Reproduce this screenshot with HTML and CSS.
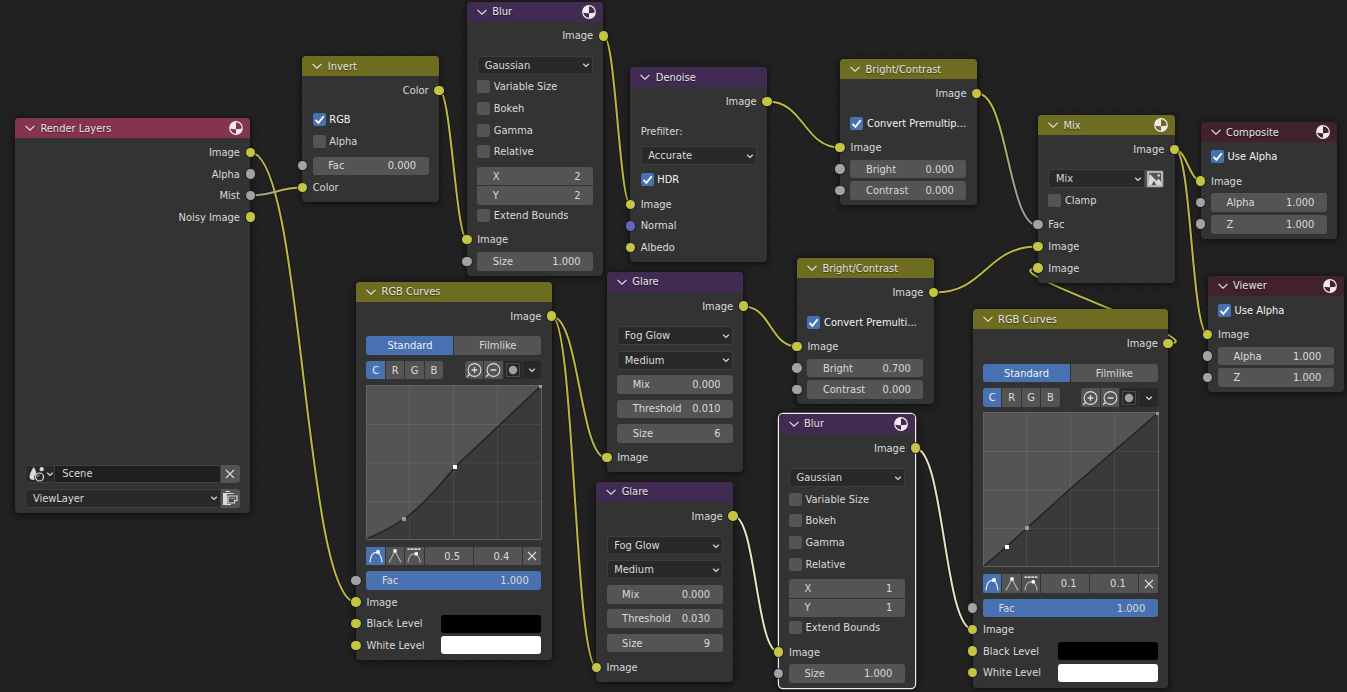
FILE: index.html
```html
<!DOCTYPE html>
<html lang="en">

<head>
    <meta charset="UTF-8">
    <meta name="viewport" content="width=device-width, initial-scale=1.0">
    <title>Compositor</title>
    <link rel="stylesheet" href="styles.css">
</head>

<body>

    <!-- icons -->
    <svg class="defs" width="0" height="0">
        <symbol id="chevron" viewBox="0 0 12 12"><path d="M1.5 3.8 6 8.2 10.5 3.8" fill="none" stroke="currentColor" stroke-width="1.1"/></symbol>
        <symbol id="down" viewBox="0 0 8 8"><path d="M1.2 2.7 4 5.4 6.8 2.7" fill="none" stroke="currentColor" stroke-width="1.2"/></symbol>
        <symbol id="ball" viewBox="0 0 14 14">
            <circle cx="7" cy="7" r="6.3" fill="none" stroke="currentColor" stroke-width="1.2"/>
            <path d="M7 7V.8A6.2 6.2 0 0 0 .9 7.6Q3.5 8.4 7 8.2V13.2Q12.6 12.7 13.2 7.4Q10.5 8.2 7 8.2Z" fill="currentColor"/>
        </symbol>
        <symbol id="check" viewBox="0 0 12 12"><path d="M2.3 6.4 5 9.1 9.9 3" fill="none" stroke="#fff" stroke-width="1.7"/></symbol>
        <symbol id="cross" viewBox="0 0 12 12"><path d="M2 2 10 10M10 2 2 10" fill="none" stroke="currentColor" stroke-width="1.1"/></symbol>
        <symbol id="zoom-in" viewBox="0 0 16 16"><path d="M3.8 12.2 1 14.8M5.6 8H11.4M8.5 5.1V10.9" fill="none" stroke="currentColor" stroke-width="1.3"/><circle cx="8.5" cy="8" r="6.4" fill="none" stroke="currentColor" stroke-width="1.1"/></symbol>
        <symbol id="zoom-out" viewBox="0 0 16 16"><path d="M3.8 12.2 1 14.8M5.6 8H11.4" fill="none" stroke="currentColor" stroke-width="1.3"/><circle cx="8.5" cy="8" r="6.4" fill="none" stroke="currentColor" stroke-width="1.1"/></symbol>
        <symbol id="clip" viewBox="0 0 16 16"><rect x="1.5" y="1.5" width="13" height="13" fill="none" stroke="#4a4a4a"/><circle cx="8" cy="8" r="4.2" fill="#a0a0a0"/></symbol>
        <symbol id="auto" viewBox="0 0 16 16"><path d="M2 14.5C2.500 1 13.500 1 14 14.5" fill="none" stroke="currentColor" stroke-width="1.1"/><rect x="8.300" y="2.200" width="3.500" height="3.500" fill="#fff"/></symbol>
        <symbol id="vector" viewBox="0 0 16 16"><path d="M2 14.5 8 3 14 14.5" fill="none" stroke="#b4b4b4" stroke-width="1.1"/><rect x="6.400" y="1.300" width="3.200" height="3.200" fill="#fff"/></symbol>
        <symbol id="clamped" viewBox="0 0 16 16"><path d="M1.500 1.200H14.500" stroke="#fff" stroke-width="1.2" stroke-dasharray="2.800 .6"/><path d="M2 14.5C2.500 3 13.500 3 14 14.5" fill="none" stroke="#b4b4b4" stroke-width="1.1"/><rect x="8.700" y="4.200" width="3.200" height="3.200" fill="#fff"/></symbol>
        <symbol id="scene" viewBox="0 0 16 16"><path d="M4.800 .8Q7.200 5 7.300 7.800Q4.300 10 5.500 14Q.5 14.200 .5 10.500Q.7 7.500 4.800 .8Z" fill="currentColor"/><circle cx="12.700" cy="3.200" r="2.100" fill="currentColor"/><circle cx="10.500" cy="11" r="4" fill="none" stroke="currentColor" stroke-width="1.2"/><path d="M10.500 9Q8.600 9.200 8.500 11" fill="none" stroke="currentColor" stroke-width=".8"/></symbol>
        <symbol id="layer" viewBox="0 0 16 16"><path d="M3.500 1.500H8M1 3.500H11.500M1 14.500H9" fill="none" stroke="currentColor" stroke-width="1.2"/><path d="M1 3H5V15H1Z" fill="currentColor"/><path d="M6 6H15V10.500H12.500V13H6Z" fill="#4c4c4c" stroke="currentColor" stroke-width="1.2"/><path d="M7.500 8.300H14" stroke="currentColor" stroke-dasharray="1.2 1"/></symbol>
        <symbol id="image-alpha" viewBox="0 0 16 16"><rect x="1" y="1" width="14" height="14" fill="#555" stroke="currentColor" stroke-width="1.4"/><path d="M2 8V14H4.500L7 9.500L3 3.500 2.500 3ZM2.500 2.500 9.500 14H14V11L11.500 7.500 9.500 10Z" fill="currentColor"/><circle cx="11.700" cy="4.500" r="1.300" fill="currentColor"/></symbol>
    </svg>

    <div class="editor">

        <!-- links between sockets -->
        <svg class="links" width="1347" height="692">
            <defs>
                <linearGradient id="mist" gradientUnits="userSpaceOnUse" x1="250" y1="0" x2="303" y2="0">
                    <stop offset="0.1" stop-color="#9c9c9c"/><stop offset="0.8" stop-color="#bdbb4d"/>
                </linearGradient>
                <linearGradient id="fac" gradientUnits="userSpaceOnUse" x1="0" y1="93" x2="0" y2="225">
                    <stop offset="0.1" stop-color="#bdbb40"/><stop offset="0.8" stop-color="#9c9c9c"/>
                </linearGradient>
                <g id="link-paths">
                    <path d="M250.5 152.5C303.5 152.5 303.5 602.5 356.5 602.5"/>
                    <path d="M439.5 90.5C451 90.5 456 239.5 467 239.5"/>
                    <path d="M604 36.5C615.500 36.5 619.500 204.5 630.5 204.5"/>
                    <path d="M768 101.5C804 101.5 804 147.5 840 147.5"/>
                    <path d="M934.5 292.5C986 292.5 986 246.5 1038 246.5"/>
                    <path d="M1168 343.5C1221 343.5 985 268.5 1038 268.5"/>
                    <path d="M1175 149.5C1186 149.5 1190 181 1201 181"/>
                    <path d="M1175 149.5C1191.5 149.5 1191.5 334.5 1208 334.5"/>
                    <path d="M552 316.5C579.5 316.5 579.5 458.5 607 458.5"/>
                    <path d="M552 316.5C574.5 316.5 574.5 667.5 597 667.5"/>
                    <path d="M744 306.5C770.5 306.5 770.5 346.5 797 346.5"/>
                </g>
                <path id="link-mist" d="M250.5 195.5C276.5 195.5 276.5 187.5 303 187.5"/>
                <path id="link-fac" d="M977.5 93.5C1008 93.5 1008 225.5 1038 225.5"/>
                <g id="link-selected">
                    <path d="M733.5 516C756 516 756 652.5 779 652.5"/>
                    <path d="M915.5 448.5C944 448.5 944 629.5 973 629.5"/>
                </g>
            </defs>
            <g class="outline"><use href="#link-paths"/><use href="#link-mist"/><use href="#link-fac"/><use href="#link-selected"/></g>
            <use href="#link-paths" class="link"/>
            <use href="#link-mist" class="link mist"/>
            <use href="#link-fac" class="link fac"/>
            <use href="#link-selected" class="link selected"/>
        </svg>

        <div class="node input render-layers">
            <div class="title"><svg class="chevron"><use href="#chevron"/></svg>Render Layers<svg class="ball"><use href="#ball"/></svg></div>
            <div class="row out"><i class="socket"></i>Image</div>
            <div class="row out"><i class="socket gray"></i>Alpha</div>
            <div class="row out"><i class="socket gray"></i>Mist</div>
            <div class="row out"><i class="socket"></i>Noisy Image</div>
            <div class="row push">
                <div class="scene-icon"><svg class="icon"><use href="#scene"/></svg><svg class="down"><use href="#down"/></svg></div>
                <div class="name">Scene</div>
                <div class="button end"><svg class="cross"><use href="#cross"/></svg></div>
            </div>
            <div class="row gap">
                <div class="select joined">ViewLayer<svg class="down"><use href="#down"/></svg></div>
                <div class="button end"><svg class="icon"><use href="#layer"/></svg></div>
            </div>
        </div>

        <div class="node color invert">
            <div class="title"><svg class="chevron"><use href="#chevron"/></svg>Invert</div>
            <div class="row out"><i class="socket"></i>Color</div>
            <div class="row first on"><span class="box"><svg><use href="#check"/></svg></span>RGB</div>
            <div class="row"><span class="box"></span>Alpha</div>
            <div class="row gap"><i class="socket gray"></i><div class="field"><span>Fac</span><span>0.000</span></div></div>
            <div class="row"><i class="socket"></i>Color</div>
        </div>

        <div class="node filter blur-a">
            <div class="title"><svg class="chevron"><use href="#chevron"/></svg>Blur<svg class="ball"><use href="#ball"/></svg></div>
            <div class="row out"><i class="socket"></i>Image</div>
            <div class="row first"><div class="select">Gaussian<svg class="down"><use href="#down"/></svg></div></div>
            <div class="row"><span class="box"></span>Variable Size</div>
            <div class="row"><span class="box"></span>Bokeh</div>
            <div class="row"><span class="box"></span>Gamma</div>
            <div class="row"><span class="box"></span>Relative</div>
            <div class="pair">
                <div class="field"><span>X</span><span>2</span></div>
                <div class="field"><span>Y</span><span>2</span></div>
            </div>
            <div class="row"><span class="box"></span>Extend Bounds</div>
            <div class="row gap"><i class="socket"></i>Image</div>
            <div class="row"><i class="socket gray"></i><div class="field"><span>Size</span><span>1.000</span></div></div>
        </div>

        <div class="node filter denoise">
            <div class="title"><svg class="chevron"><use href="#chevron"/></svg>Denoise</div>
            <div class="row out"><i class="socket"></i>Image</div>
            <div class="row first">Prefilter:</div>
            <div class="row gap"><div class="select">Accurate<svg class="down"><use href="#down"/></svg></div></div>
            <div class="row gap on"><span class="box"><svg><use href="#check"/></svg></span>HDR</div>
            <div class="row gap"><i class="socket"></i>Image</div>
            <div class="row"><i class="socket blue"></i>Normal</div>
            <div class="row"><i class="socket"></i>Albedo</div>
        </div>

        <div class="node color bright-a">
            <div class="title"><svg class="chevron"><use href="#chevron"/></svg>Bright/Contrast</div>
            <div class="row out"><i class="socket"></i>Image</div>
            <div class="row first on"><span class="box"><svg><use href="#check"/></svg></span>Convert Premultip...</div>
            <div class="row gap"><i class="socket"></i>Image</div>
            <div class="row"><i class="socket gray"></i><div class="field"><span>Bright</span><span>0.000</span></div></div>
            <div class="row"><i class="socket gray"></i><div class="field"><span>Contrast</span><span>0.000</span></div></div>
        </div>

        <div class="node color mix">
            <div class="title"><svg class="chevron"><use href="#chevron"/></svg>Mix<svg class="ball"><use href="#ball"/></svg></div>
            <div class="row out"><i class="socket"></i>Image</div>
            <div class="row first">
                <div class="select joined">Mix<svg class="down"><use href="#down"/></svg></div>
                <div class="button end"><svg class="icon"><use href="#image-alpha"/></svg></div>
            </div>
            <div class="row"><span class="box"></span>Clamp</div>
            <div class="row gap"><i class="socket gray"></i>Fac</div>
            <div class="row"><i class="socket"></i>Image</div>
            <div class="row"><i class="socket"></i>Image</div>
        </div>

        <div class="node output composite">
            <div class="title"><svg class="chevron"><use href="#chevron"/></svg>Composite<svg class="ball"><use href="#ball"/></svg></div>
            <div class="row on"><span class="box"><svg><use href="#check"/></svg></span>Use Alpha</div>
            <div class="row gap"><i class="socket"></i>Image</div>
            <div class="row"><i class="socket gray"></i><div class="field"><span>Alpha</span><span>1.000</span></div></div>
            <div class="row"><i class="socket gray"></i><div class="field"><span>Z</span><span>1.000</span></div></div>
        </div>

        <div class="node output viewer">
            <div class="title"><svg class="chevron"><use href="#chevron"/></svg>Viewer<svg class="ball"><use href="#ball"/></svg></div>
            <div class="row on"><span class="box"><svg><use href="#check"/></svg></span>Use Alpha</div>
            <div class="row gap"><i class="socket"></i>Image</div>
            <div class="row"><i class="socket gray"></i><div class="field"><span>Alpha</span><span>1.000</span></div></div>
            <div class="row"><i class="socket gray"></i><div class="field"><span>Z</span><span>1.000</span></div></div>
        </div>

        <div class="node color curves-a">
            <div class="title"><svg class="chevron"><use href="#chevron"/></svg>RGB Curves</div>
            <div class="row out"><i class="socket"></i>Image</div>
            <div class="row first"><div class="tabs"><span class="active">Standard</span><span>Filmlike</span></div></div>
            <div class="row gap tools">
                <div class="channels"><span class="active">C</span><span>R</span><span>G</span><span>B</span></div>
                <div class="view">
                    <span><svg class="icon"><use href="#zoom-in"/></svg></span>
                    <span><svg class="icon"><use href="#zoom-out"/></svg></span>
                    <span class="dark"><svg class="icon"><use href="#clip"/></svg></span>
                    <span class="dark"><svg class="down"><use href="#down"/></svg></span>
                </div>
            </div>
            <svg class="plot" viewBox="0 0 176 155">
                <path class="area" d="M0 0H175L89 82Q56 122 38 134Q20 146 0 154Z"/>
                <path class="grid" d="M43.5 0V155M87.5 0V155M131.5 0V155M0 39.5H176M0 78H176M0 116.5H176"/>
                <path class="curve" d="M0 154Q20 146 38 134Q56 122 89 82L175 1"/>
                <path class="frame" d="M.5 .5H175.5V154.5H.5Z"/>
                <rect class="point" x="36" y="132" width="4" height="4"/>
                <rect class="point" x="173" y="0" width="3" height="3"/>
                <rect class="point picked" x="87" y="80" width="4" height="4"/>
            </svg>
            <div class="row handles">
                <span class="active"><svg class="icon"><use href="#auto"/></svg></span>
                <span><svg class="icon"><use href="#vector"/></svg></span>
                <span><svg class="icon"><use href="#clamped"/></svg></span>
                <span class="coord">0.5</span>
                <span class="coord">0.4</span>
                <span><svg class="cross"><use href="#cross"/></svg></span>
            </div>
            <div class="row gap"><i class="socket gray"></i><div class="field full"><span>Fac</span><span>1.000</span></div></div>
            <div class="row"><i class="socket"></i>Image</div>
            <div class="row"><i class="socket"></i>Black Level<div class="swatch black"></div></div>
            <div class="row"><i class="socket"></i>White Level<div class="swatch white"></div></div>
        </div>

        <div class="node filter glare-a">
            <div class="title"><svg class="chevron"><use href="#chevron"/></svg>Glare</div>
            <div class="row out"><i class="socket"></i>Image</div>
            <div class="row first"><div class="select">Fog Glow<svg class="down"><use href="#down"/></svg></div></div>
            <div class="row gap"><div class="select">Medium<svg class="down"><use href="#down"/></svg></div></div>
            <div class="row gap"><div class="field"><span>Mix</span><span>0.000</span></div></div>
            <div class="row gap"><div class="field"><span>Threshold</span><span>0.010</span></div></div>
            <div class="row gap"><div class="field"><span>Size</span><span>6</span></div></div>
            <div class="row gap"><i class="socket"></i>Image</div>
        </div>

        <div class="node filter glare-b">
            <div class="title"><svg class="chevron"><use href="#chevron"/></svg>Glare</div>
            <div class="row out"><i class="socket"></i>Image</div>
            <div class="row first"><div class="select">Fog Glow<svg class="down"><use href="#down"/></svg></div></div>
            <div class="row gap"><div class="select">Medium<svg class="down"><use href="#down"/></svg></div></div>
            <div class="row gap"><div class="field"><span>Mix</span><span>0.000</span></div></div>
            <div class="row gap"><div class="field"><span>Threshold</span><span>0.030</span></div></div>
            <div class="row gap"><div class="field"><span>Size</span><span>9</span></div></div>
            <div class="row gap"><i class="socket"></i>Image</div>
        </div>

        <div class="node color bright-b">
            <div class="title"><svg class="chevron"><use href="#chevron"/></svg>Bright/Contrast</div>
            <div class="row out"><i class="socket"></i>Image</div>
            <div class="row first on"><span class="box"><svg><use href="#check"/></svg></span>Convert Premulti...</div>
            <div class="row gap"><i class="socket"></i>Image</div>
            <div class="row"><i class="socket gray"></i><div class="field"><span>Bright</span><span>0.700</span></div></div>
            <div class="row"><i class="socket gray"></i><div class="field"><span>Contrast</span><span>0.000</span></div></div>
        </div>

        <div class="node filter blur-b selected">
            <div class="title"><svg class="chevron"><use href="#chevron"/></svg>Blur<svg class="ball"><use href="#ball"/></svg></div>
            <div class="row out"><i class="socket"></i>Image</div>
            <div class="row first"><div class="select">Gaussian<svg class="down"><use href="#down"/></svg></div></div>
            <div class="row"><span class="box"></span>Variable Size</div>
            <div class="row"><span class="box"></span>Bokeh</div>
            <div class="row"><span class="box"></span>Gamma</div>
            <div class="row"><span class="box"></span>Relative</div>
            <div class="pair">
                <div class="field"><span>X</span><span>1</span></div>
                <div class="field"><span>Y</span><span>1</span></div>
            </div>
            <div class="row"><span class="box"></span>Extend Bounds</div>
            <div class="row gap"><i class="socket"></i>Image</div>
            <div class="row"><i class="socket gray"></i><div class="field"><span>Size</span><span>1.000</span></div></div>
        </div>

        <div class="node color curves-b">
            <div class="title"><svg class="chevron"><use href="#chevron"/></svg>RGB Curves</div>
            <div class="row out"><i class="socket"></i>Image</div>
            <div class="row first"><div class="tabs"><span class="active">Standard</span><span>Filmlike</span></div></div>
            <div class="row gap tools">
                <div class="channels"><span class="active">C</span><span>R</span><span>G</span><span>B</span></div>
                <div class="view">
                    <span><svg class="icon"><use href="#zoom-in"/></svg></span>
                    <span><svg class="icon"><use href="#zoom-out"/></svg></span>
                    <span class="dark"><svg class="icon"><use href="#clip"/></svg></span>
                    <span class="dark"><svg class="down"><use href="#down"/></svg></span>
                </div>
            </div>
            <svg class="plot" viewBox="0 0 176 155">
                <path class="area" d="M0 0H175L87 77L44 116Q20 138 0 154Z"/>
                <path class="grid" d="M43.5 0V155M87.5 0V155M131.5 0V155M0 39.5H176M0 78H176M0 116.5H176"/>
                <path class="curve" d="M1 154Q20 138 44 116L87 77L175 1"/>
                <path class="frame" d="M.5 .5H175.5V154.5H.5Z"/>
                <rect class="point" x="42" y="114" width="4" height="4"/>
                <rect class="point" x="173" y="0" width="3" height="3"/>
                <rect class="point picked" x="22" y="133" width="4" height="4"/>
            </svg>
            <div class="row handles">
                <span class="active"><svg class="icon"><use href="#auto"/></svg></span>
                <span><svg class="icon"><use href="#vector"/></svg></span>
                <span><svg class="icon"><use href="#clamped"/></svg></span>
                <span class="coord">0.1</span>
                <span class="coord">0.1</span>
                <span><svg class="cross"><use href="#cross"/></svg></span>
            </div>
            <div class="row gap"><i class="socket gray"></i><div class="field full"><span>Fac</span><span>1.000</span></div></div>
            <div class="row"><i class="socket"></i>Image</div>
            <div class="row"><i class="socket"></i>Black Level<div class="swatch black"></div></div>
            <div class="row"><i class="socket"></i>White Level<div class="swatch white"></div></div>
        </div>

    </div>

</body>

</html>
```
FILE: styles.css
```css
* {
    box-sizing: border-box;
}

body {
    margin: 0;
    background-color: #212121;
    overflow: hidden;
    font-family: "DejaVu Sans Condensed", "DejaVu Sans", sans-serif;
    font-stretch: condensed;
    font-size: 11px;
    color: #dadada;
}

.defs {
    position: absolute;
}

.editor {
    position: relative;
    width: 1347px;
    height: 692px;
    overflow: hidden;
    background-image: radial-gradient(circle at center, #292929 0.8px, transparent 1.5px);
    background-size: 19.65px 19.65px;
    background-position: -1.8px 3.2px;
}

/* links */
.links {
    position: absolute;
    left: 0;
    top: 0;
    fill: none;
}

.outline {
    stroke: #181818;
    stroke-width: 4;
}

.link {
    stroke: #bdb93f;
    stroke-width: 2;
}

.link.mist {
    stroke: url(#mist);
}

.link.fac {
    stroke: url(#fac);
}

.link.selected {
    stroke: #e6e5c4;
}

/* nodes */
.node {
    position: absolute;
    display: flex;
    flex-direction: column;
    width: 136.6px;
    padding: 0 10.3px 3.9px;
    background-color: #333333;
    border-radius: 4px;
    box-shadow: 0 1px 6px 1px rgba(0, 0, 0, 0.55);
}

.node.selected {
    box-shadow: 0 0 0 1.2px #f0f0f0, 0 1px 6px 2px rgba(0, 0, 0, 0.55);
}

.render-layers { left: 15px; top: 118px; width: 235.2px; height: 395px; }
.invert { left: 302.4px; top: 56px; }
.blur-a { left: 466.9px; top: 1.5px; }
.denoise { left: 630.4px; top: 67.3px; }
.bright-a { left: 840.2px; top: 59.3px; }
.mix { left: 1038px; top: 115px; }
.composite { left: 1200.7px; top: 122.2px; }
.viewer { left: 1207.7px; top: 275.6px; }
.curves-a { left: 356.2px; top: 281.8px; width: 195.4px; }
.glare-a { left: 606.9px; top: 271.8px; }
.glare-b { left: 596.3px; top: 481.7px; }
.bright-b { left: 797.1px; top: 258.3px; }
.blur-b { left: 778.7px; top: 413.8px; }
.curves-b { left: 972.7px; top: 309.3px; width: 195.4px; }

.title {
    display: flex;
    align-items: center;
    flex: none;
    height: 20px;
    margin: 0 -10.3px 3.7px;
    padding: 0 7px 0 9px;
    border-radius: 4px 4px 0 0;
    color: #e6e6e6;
    text-shadow: 0 1px 1px rgba(0, 0, 0, 0.5);
}

.input .title { background-color: #84344e; }
.color .title { background-color: #6e6c20; }
.filter .title { background-color: #422b52; }
.output .title { background-color: #41212b; }

.chevron {
    width: 12px;
    height: 12px;
    margin-right: 4.4px;
}

.ball {
    width: 14px;
    height: 14px;
    margin-left: auto;
    color: #f3e9ee;
}

.row {
    position: relative;
    display: flex;
    align-items: center;
    flex: none;
    height: 21.6px;
    white-space: nowrap;
}

.gap {
    margin-top: 2.8px;
}

.first {
    margin-top: 7.8px;
}

.push {
    margin-top: auto;
}

.out {
    justify-content: flex-end;
}

.on {
    color: #f2f2f2;
}

.socket {
    position: absolute;
    left: -15px;
    top: 6px;
    width: 9.4px;
    height: 9.4px;
    border-radius: 50%;
    background-color: #c5c544;
    box-shadow: 0 0 0 0.8px #1c1c1c;
}

.out .socket {
    left: auto;
    right: -15px;
}

.socket.gray { background-color: #a3a3a3; }
.socket.blue { background-color: #6464bf; }

/* widgets */
.field {
    display: flex;
    flex: 1;
    align-items: center;
    justify-content: space-between;
    height: 18.6px;
    padding: 0 12.6px 0 15.5px;
    border-radius: 3px;
    background-color: #545454;
}

.field.full {
    background-color: #4871b1;
}

.pair {
    display: flex;
    flex-direction: column;
    gap: 0.8px;
    flex: none;
    height: 37.4px;
    margin-top: 4.6px;
}

.pair .field:first-child { border-radius: 3px 3px 0 0; }
.pair .field:last-child { border-radius: 0 0 3px 3px; }

.select {
    display: flex;
    flex: 1;
    align-items: center;
    justify-content: space-between;
    height: 19px;
    padding: 0 2px 0 6.6px;
    border: 1px solid #3e3e3e;
    border-radius: 3px;
    background-color: #292929;
}

.select.joined {
    border-radius: 3px 0 0 3px;
}

.down {
    width: 8px;
    height: 8px;
}

.cross {
    width: 12px;
    height: 12px;
}

.icon {
    flex: none;
    width: 16px;
    height: 16px;
}

.button {
    display: flex;
    align-items: center;
    justify-content: center;
    width: 19px;
    height: 18.6px;
    background-color: #545454;
}

.end {
    border-radius: 0 3px 3px 0;
}

.box {
    display: flex;
    width: 13px;
    height: 13px;
    margin-right: 3.6px;
    border-radius: 2px;
    background-color: #545454;
}

.on .box {
    background-color: #4871b1;
}

.box svg {
    width: 13px;
    height: 13px;
}

.scene-icon,
.name {
    display: flex;
    align-items: center;
    height: 18.6px;
    border: 1px solid #3e3e3e;
    background-color: #292929;
}

.scene-icon {
    width: 30px;
    padding-left: 3px;
    border-radius: 3px 0 0 3px;
}

.scene-icon .down {
    margin-left: 1px;
}

.name {
    flex: 1;
    padding-left: 7px;
    border-left: none;
    background-color: #1f1f1f;
}

/* curve widget */
.tabs,
.channels,
.view,
.handles {
    display: flex;
    gap: 1px;
    border-radius: 3px;
    overflow: hidden;
}

.tabs {
    flex: 1;
}

.tabs span,
.channels span,
.view span,
.handles span {
    display: flex;
    align-items: center;
    justify-content: center;
    height: 18.4px;
    background-color: #545454;
}

.tabs span {
    flex: 1;
}

.tools {
    justify-content: space-between;
}

.channels span {
    width: 18.4px;
}

.view span {
    width: 18.4px;
}

.view span.dark {
    background-color: #282828;
}

.handles span {
    width: 18.4px;
}

.handles span.coord {
    flex: 1;
    padding-left: 7px;
}

.tabs .active,
.channels .active,
.handles .active {
    background-color: #4871b1;
    color: #f0f0f0;
}

.plot {
    flex: none;
    width: 176px;
    height: 155px;
    margin: 4px 0 5.5px;
    background-color: #3a3a3a;
}

.area { fill: #545454; }
.grid { fill: none; stroke: rgba(255, 255, 255, 0.08); }
.curve { fill: none; stroke: #222222; stroke-width: 1.4; }
.frame { fill: none; stroke: #636363; }
.point { fill: #999999; }
.point.picked { fill: #ffffff; }

.swatch {
    width: 100px;
    height: 18px;
    margin-left: auto;
    border-radius: 3px;
}

.swatch.black { background-color: #000000; }
.swatch.white { background-color: #ffffff; }
```
